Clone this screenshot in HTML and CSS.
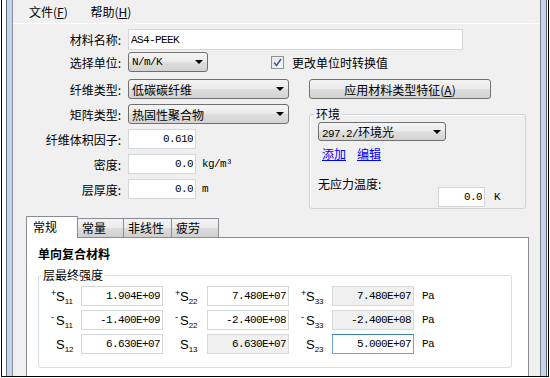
FILE: index.html
```html
<!DOCTYPE html>
<html>
<head>
  <meta charset="utf-8">
  <title>材料属性</title>
  <link rel="stylesheet" href="styles.css">
</head>
<body>
  <div class="window">
    <div class="frame">
      <div class="client">
        <div class="menubar">
          <span class="menu-item">文件(<u>F</u>)</span>
          <span class="menu-item">帮助(<u>H</u>)</span>
        </div>

        <div class="content">
          <div class="row row-name">
            <label class="lbl">材料名称:</label>
            <input class="field name-field" type="text" value="AS4-PEEK">
          </div>

          <div class="row row-units">
            <label class="lbl">选择单位:</label>
            <div class="combo combo-units"><span class="mono">N/m/K</span><span class="arrow"></span></div>
            <span class="check">
              <svg width="9" height="9" viewBox="0 0 9 9"><path d="M1 4.5 L3.5 7.5 L8 1" fill="none" stroke="#3c5a9a" stroke-width="1.6"/></svg>
            </span>
            <span class="check-text">更改单位时转换值</span>
          </div>

          <div class="mid">
            <div class="left">
              <div class="row">
                <label class="lbl">纤维类型:</label>
                <div class="combo combo-type"><span>低碳碳纤维</span><span class="arrow"></span></div>
              </div>
              <div class="row">
                <label class="lbl">矩阵类型:</label>
                <div class="combo combo-type"><span>热固性聚合物</span><span class="arrow"></span></div>
              </div>
              <div class="row">
                <label class="lbl">纤维体积因子:</label>
                <input class="field num short-field" type="text" value="0.610">
              </div>
              <div class="row">
                <label class="lbl">密度:</label>
                <input class="field num short-field" type="text" value="0.0">
                <span class="unit">kg/m³</span>
              </div>
              <div class="row">
                <label class="lbl">层厚度:</label>
                <input class="field num short-field" type="text" value="0.0">
                <span class="unit">m</span>
              </div>
            </div>

            <div class="right">
              <button class="btn">应用材料类型特征(<u>A</u>)</button>
              <fieldset class="group env">
                <legend>环境</legend>
                <div class="combo combo-env"><span><span class="mono">297.2/</span>环境光</span><span class="arrow"></span></div>
                <div class="links"><a href="#">添加</a><a href="#">编辑</a></div>
                <div class="temp-label">无应力温度:</div>
                <div class="temp-row">
                  <input class="field num temp-field" type="text" value="0.0">
                  <span class="unit">K</span>
                </div>
              </fieldset>
            </div>
          </div>

          <div class="tabs">
            <span class="tab active">常规</span>
            <span class="tab tab-2">常量</span>
            <span class="tab tab-3">非线性</span>
            <span class="tab tab-4">疲劳</span>
          </div>

          <div class="pane">
            <div class="title">单向复合材料</div>
            <fieldset class="group strength">
              <legend>层最终强度</legend>
              <div class="grid">
                <span class="sym"><span class="sign">+</span>S<sub>11</sub></span>
                <input class="field num" type="text" value="1.904E+09">
                <span class="sym"><span class="sign">+</span>S<sub>22</sub></span>
                <input class="field num" type="text" value="7.480E+07">
                <span class="sym"><span class="sign">+</span>S<sub>33</sub></span>
                <input class="field num readonly" type="text" value="7.480E+07" readonly>
                <span class="unit">Pa</span>

                <span class="sym"><span class="sign">-</span>S<sub>11</sub></span>
                <input class="field num" type="text" value="-1.400E+09">
                <span class="sym"><span class="sign">-</span>S<sub>22</sub></span>
                <input class="field num" type="text" value="-2.400E+08">
                <span class="sym"><span class="sign">-</span>S<sub>33</sub></span>
                <input class="field num readonly" type="text" value="-2.400E+08" readonly>
                <span class="unit">Pa</span>

                <span class="sym"><span class="sign"></span>S<sub>12</sub></span>
                <input class="field num" type="text" value="6.630E+07">
                <span class="sym"><span class="sign"></span>S<sub>13</sub></span>
                <input class="field num readonly" type="text" value="6.630E+07" readonly>
                <span class="sym"><span class="sign"></span>S<sub>23</sub></span>
                <input class="field num focused" type="text" value="5.000E+07">
                <span class="unit">Pa</span>
              </div>
            </fieldset>
          </div>
        </div>
      </div>
    </div>
  </div>
</body>
</html>
```

FILE: styles.css
```css
* {
  box-sizing: border-box;
}

body {
  margin: 0;
  background: #fff;
  font-family: "Noto Sans CJK SC", sans-serif;
  font-size: 12px;
  color: #000;
}

/* window chrome */
.window {
  margin-left: 1px;
  width: 548px;
  height: 377px;
  border: 1px solid #000;
  border-top: 0;
  padding: 0 1px 0 4px;
  overflow: hidden;
}

.frame {
  height: 100%;
  border-left: 1px solid #646a73;
  border-right: 1px solid #5e6167;
  padding: 0 5px;
  background: #c2d5ed;
}

.client {
  height: 100%;
  border-left: 1px solid #8a8f97;
  border-right: 1px solid #7d8289;
  background: #f0f0f0;
  overflow: hidden;
}

.menubar {
  height: 24px;
  border-bottom: 1px solid #fff;
  padding: 3px 0 0 6px;
  line-height: 18px;
}

.menu-item {
  padding: 0 10px;
}

/* form */
.content {
  padding-top: 5px;
}

.row {
  display: flex;
  align-items: center;
  height: 20px;
}

.lbl {
  flex: none;
  width: 108px;
  margin-right: 7px;
  text-align: right;
}

.mono,
.unit {
  font-family: "Liberation Mono", monospace;
  font-size: 11px;
  letter-spacing: -0.6px;
}

.field {
  height: 20px;
  border: 1px solid #d3d6db;
  background: #fff;
  padding: 0 2px;
  font-family: "Liberation Mono", monospace;
  font-size: 11px;
  letter-spacing: -0.6px;
  color: #000;
  outline: none;
  width: 100%;
}

.num {
  text-align: right;
}

.readonly {
  background: #f0f0f0;
  border-color: #d9d9d9;
}

.focused {
  border-color: #6aa3d8;
  border-top-color: #3d7bad;
}

.row-name {
  height: 21px;
}

.name-field {
  width: 335px;
  height: 21px;
}

.row-units {
  margin-top: 2px;
}

.combo {
  display: flex;
  align-items: center;
  justify-content: space-between;
  height: 20px;
  border: 1px solid #707070;
  border-radius: 3px;
  padding: 0 4px 0 3px;
  background: linear-gradient(#f5f5f5, #eaeaea 48%, #dedede 52%, #d3d3d3);
}

.arrow {
  width: 0;
  height: 0;
  border-left: 4px solid transparent;
  border-right: 4px solid transparent;
  border-top: 4px solid #000;
}

.combo-units {
  width: 80px;
}

.combo-type {
  width: 161px;
}

.check {
  display: flex;
  align-items: center;
  justify-content: center;
  width: 13px;
  height: 13px;
  margin-left: 63px;
  border: 1px solid #8e8f8f;
  background: linear-gradient(135deg, #e6e6e6, #fafafa);
}

.check-text {
  margin-left: 8px;
}

.mid {
  display: flex;
  margin-top: 7px;
}

.left {
  width: 296px;
  display: flex;
  flex-direction: column;
  gap: 5px;
}

.short-field {
  width: 68px;
}

.unit {
  margin-left: 6px;
}

.right {
  width: 217px;
}

.btn {
  display: block;
  width: 182px;
  height: 20px;
  border: 1px solid #707070;
  border-radius: 3px;
  padding: 0;
  background: linear-gradient(#f5f5f5, #eaeaea 48%, #dedede 52%, #d3d3d3);
  font-family: "Noto Sans CJK SC", sans-serif;
  font-size: 12px;
  color: #000;
}

.group {
  margin: 0;
  border: 1px solid #d0d4d8;
  border-radius: 3px;
  box-shadow: inset 1px 1px 0 #fff;
}

.group legend {
  padding: 0 2px;
  line-height: 14px;
}

.env {
  width: 217px;
  margin-top: 8px;
  padding: 1px 8px 1px 8px;
}

.env legend {
  margin-left: -4px;
}

.combo-env {
  width: 128px;
  height: 19px;
}

.links {
  margin: 6px 0 0 4px;
  line-height: 14px;
}

.links a {
  color: #0000ff;
  margin-right: 11px;
}

.temp-label {
  margin-top: 16px;
  line-height: 14px;
}

.temp-row {
  display: flex;
  align-items: center;
  margin-top: -4px;
}

.temp-field {
  width: 47px;
  margin-left: 120px;
}

.temp-row .unit {
  margin-left: 9px;
}

/* tabs */
.tabs {
  display: flex;
  align-items: flex-end;
  height: 21px;
  margin: 7px 0 0 13px;
}

.tab {
  height: 19px;
  border: 1px solid #898c95;
  border-bottom: 0;
  margin-left: -1px;
  padding-left: 4px;
  line-height: 18px;
  background: linear-gradient(#f3f3f3, #ebebeb 50%, #dddddd 51%, #cfcfcf);
}

.tab.active {
  position: relative;
  z-index: 1;
  width: 52px;
  height: 22px;
  margin-left: 0;
  margin-bottom: -1px;
  padding-left: 6px;
  line-height: 20px;
  background: #fff;
}

.tab-2 {
  width: 47px;
}

.tab-3 {
  width: 49px;
}

.tab-4 {
  width: 48px;
}

.pane {
  width: 503px;
  height: 200px;
  margin-left: 13px;
  border: 1px solid #898c95;
  background: #fff;
  padding: 9px 0 0 11px;
}

.title {
  font-weight: bold;
  line-height: 14px;
}

.strength {
  width: 474px;
  margin-top: 7px;
  padding: 4px 0 13px 0;
  border-color: #d5dfe5;
  box-shadow: none;
}

.strength legend {
  margin-left: 2px;
}

.grid {
  display: grid;
  grid-template-columns: 42px 82px 44px 82px 43px 82px auto;
  grid-auto-rows: 20px;
  row-gap: 4px;
  align-items: center;
}

.sym {
  padding-left: 12px;
  font-family: "Liberation Sans", sans-serif;
  font-size: 13px;
  white-space: nowrap;
}

.sign {
  display: inline-block;
  width: 5px;
  font-size: 9px;
  vertical-align: 5px;
}

.sym sub {
  font-size: 8px;
  vertical-align: -3px;
  line-height: 0;
}

.grid .unit {
  margin-left: 8px;
}
```
